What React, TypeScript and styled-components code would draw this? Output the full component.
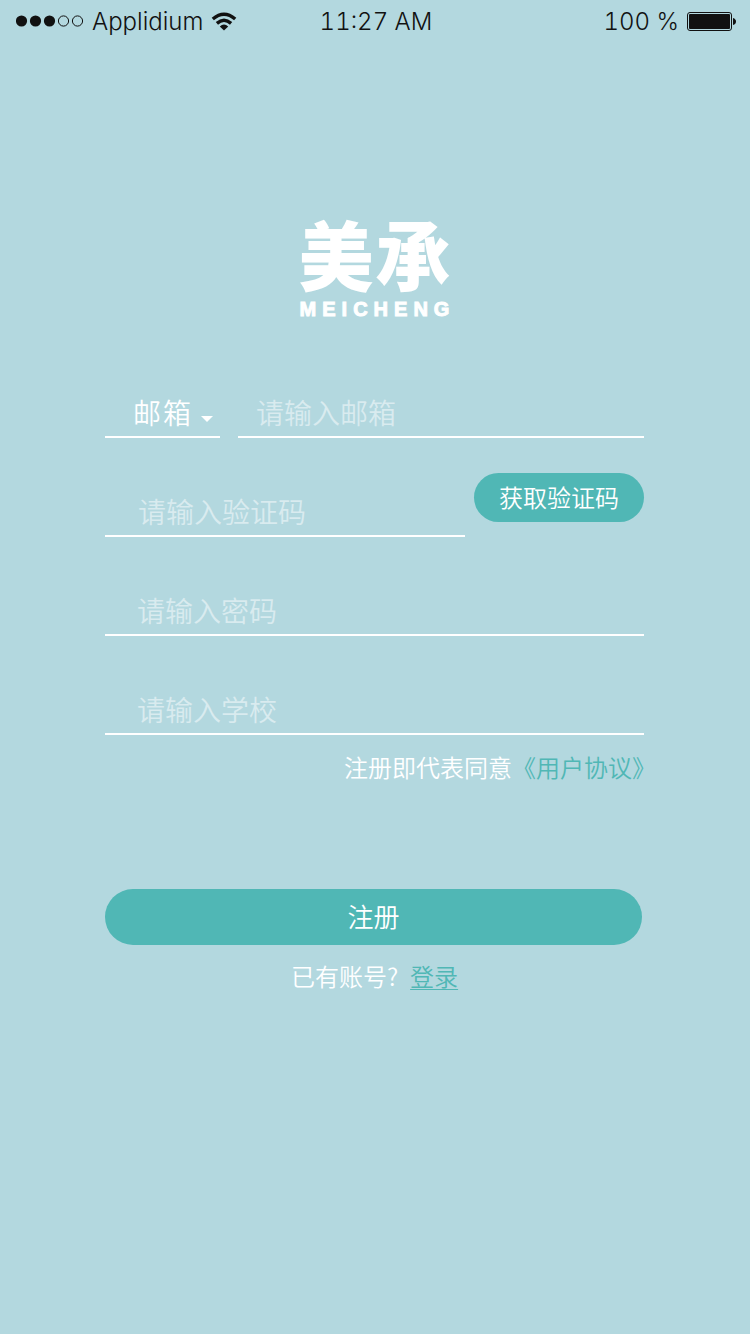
import React from "react";
import styled, { createGlobalStyle, css } from "styled-components";

const color = {
  page: "#b3d8df",
  teal: "#50b7b5",
  ink: "#111111",
  white: "#ffffff",
  hint: "rgba(255, 255, 255, 0.5)",
};

const GlobalStyle = createGlobalStyle`
  * { box-sizing: border-box; }
  body {
    margin: 0;
    background: ${color.page};
    font-family: "Noto Sans CJK SC", sans-serif;
    font-weight: 350;
  }
  input, select, button { font: inherit; color: inherit; border-radius: 0; }
`;

const Screen = styled.div`
  min-height: 100vh;
  color: ${color.white};
`;

const StatusBar = styled.header`
  display: grid;
  grid-template-columns: 1fr auto 1fr;
  align-items: center;
  height: 42px;
  padding: 0 14px 0 16px;
  color: ${color.ink};
  font-family: Inter, sans-serif;
  font-size: 24px;
  font-weight: 300;
  font-variant-numeric: tabular-nums;
`;

const StatusGroup = styled.div<{ $end?: boolean }>`
  display: flex;
  align-items: center;
  justify-content: ${(p) => (p.$end ? "flex-end" : "flex-start")};
  gap: 8px;
`;

const Main = styled.main`
  display: flex;
  flex-direction: column;
  padding: 166px 106px 40px 105px;
`;

const Brand = styled.h1`
  display: flex;
  flex-direction: column;
  align-items: center;
  margin: 0 0 70px;
  font-weight: 900;
`;

const BrandName = styled.span`
  margin-right: -2px;
  font-size: 75px;
  line-height: 90px;
  letter-spacing: 2px;
`;

const BrandLatin = styled.span`
  font-family: "Liberation Sans", sans-serif;
  font-size: 20px;
  font-weight: 700;
  line-height: 22px;
  letter-spacing: 6px;
  margin-right: -6px;
  -webkit-text-stroke: 1px ${color.white};
`;

const Form = styled.form`
  display: flex;
  flex-direction: column;
`;

const Row = styled.div<{ $gap?: number; $top?: number }>`
  display: flex;
  align-items: flex-end;
  gap: ${(p) => p.$gap ?? 0}px;
  margin-top: ${(p) => p.$top ?? 0}px;
`;

const control = css`
  height: 48px;
  padding: 0 0 3px;
  border: 0;
  border-bottom: 2px solid ${color.white};
  background: transparent;
  outline: none;
  font-size: 28px;
`;

const Field = styled.input<{ $indent: number }>`
  ${control}
  flex: 1;
  min-width: 0;
  padding-left: ${(p) => p.$indent}px;
  &::placeholder {
    color: ${color.hint};
    opacity: 1;
  }
`;

const SelectBox = styled.div`
  position: relative;
  flex: 0 0 115px;
`;

const Select = styled.select`
  ${control}
  display: block;
  width: 100%;
  padding-left: 28px;
  appearance: none;
  letter-spacing: 2px;
  option { color: ${color.ink}; }
`;

const Caret = styled.svg`
  position: absolute;
  right: 7px;
  bottom: 16px;
  pointer-events: none;
`;

const CodeButton = styled.button`
  align-self: flex-start;
  flex: 0 0 170px;
  height: 49px;
  margin-bottom: 15px;
  padding: 0 0 2px;
  border: 0;
  border-radius: 25px;
  background: ${color.teal};
  font-size: 24px;
`;

const Note = styled.p<{ $align: "right" | "center" }>`
  margin: 0;
  font-size: 24px;
  line-height: 36px;
  text-align: ${(p) => p.$align};
`;

/* The closing bracket is a full-width glyph, so it hangs past the column. */
const Agreement = styled(Note)`
  margin: 14px -12px 0 0;
`;

const TextLink = styled.a<{ $underline?: boolean }>`
  color: ${color.teal};
  text-decoration: ${(p) => (p.$underline ? "underline" : "none")};
  text-decoration-thickness: 1px;
  text-underline-offset: 3px;
`;

const LoginLink = styled(TextLink)`
  margin-left: 12px;
`;

const SubmitButton = styled.button`
  height: 56px;
  margin: 104px 2px 13px 0;
  padding: 0 0 3px;
  border: 0;
  border-radius: 28px;
  background: ${color.teal};
  font-size: 26px;
`;

function Signal() {
  return (
    <svg width="68" height="12" viewBox="0 0 68 12" aria-hidden="true">
      {[5.5, 19.5, 33.5].map((x) => (
        <circle key={x} cx={x} cy="6" r="5.6" fill={color.ink} />
      ))}
      {[47.5, 61.5].map((x) => (
        <circle key={x} cx={x} cy="6" r="5.1" fill="none" stroke={color.ink} />
      ))}
    </svg>
  );
}

function Wifi() {
  return (
    <svg width="26" height="19" viewBox="0 0 26 19" aria-hidden="true">
      <g fill="none" stroke={color.ink} strokeWidth="3.4">
        <path d="M1.8 7Q13 -2.6 24.2 7" />
        <path d="M5.9 11.4Q13 5.2 20.1 11.4" />
      </g>
      <path d="M8.8 14.4Q13 10.8 17.2 14.4L13 18.6Z" fill={color.ink} />
    </svg>
  );
}

function Battery() {
  return (
    <svg width="49" height="19" viewBox="0 0 49 19" aria-hidden="true">
      <rect x="0.5" y="0.5" width="44" height="18" rx="2.5" fill="none" stroke={color.ink} />
      <rect x="2" y="2" width="41" height="15" rx="1" fill={color.ink} />
      <path d="M46 6Q49 7 49 9.5T46 13Z" fill={color.ink} />
    </svg>
  );
}

export default function App() {
  return (
    <Screen>
      <GlobalStyle />
      <StatusBar>
        <StatusGroup>
          <Signal />
          <span>Applidium</span>
          <Wifi />
        </StatusGroup>
        <span>11:27 AM</span>
        <StatusGroup $end>
          <span>100 %</span>
          <Battery />
        </StatusGroup>
      </StatusBar>
      <Main>
        <Brand>
          <BrandName>美承</BrandName>
          <BrandLatin>MEICHENG</BrandLatin>
        </Brand>
        <Form onSubmit={(e) => e.preventDefault()}>
          <Row $gap={18}>
            <SelectBox>
              <Select aria-label="账号类型" defaultValue="email">
                <option value="email">邮箱</option>
              </Select>
              <Caret width="12" height="6" viewBox="0 0 12 6" aria-hidden="true">
                <path d="M0 0H12L6 6Z" fill={color.white} />
              </Caret>
            </SelectBox>
            <Field $indent={18} type="email" aria-label="邮箱" placeholder="请输入邮箱" />
          </Row>
          <Row $gap={9} $top={35}>
            <Field $indent={33} type="text" aria-label="验证码" placeholder="请输入验证码" />
            <CodeButton type="button">获取验证码</CodeButton>
          </Row>
          <Row $top={51}>
            <Field $indent={32} type="password" aria-label="密码" placeholder="请输入密码" />
          </Row>
          <Row $top={51}>
            <Field $indent={32} type="text" aria-label="学校" placeholder="请输入学校" />
          </Row>
          <Agreement $align="right">
            注册即代表同意<TextLink href="#agreement">《用户协议》</TextLink>
          </Agreement>
          <SubmitButton type="submit">注册</SubmitButton>
          <Note $align="center">
            已有账号?
            <LoginLink href="#login" $underline>
              登录
            </LoginLink>
          </Note>
        </Form>
      </Main>
    </Screen>
  );
}
